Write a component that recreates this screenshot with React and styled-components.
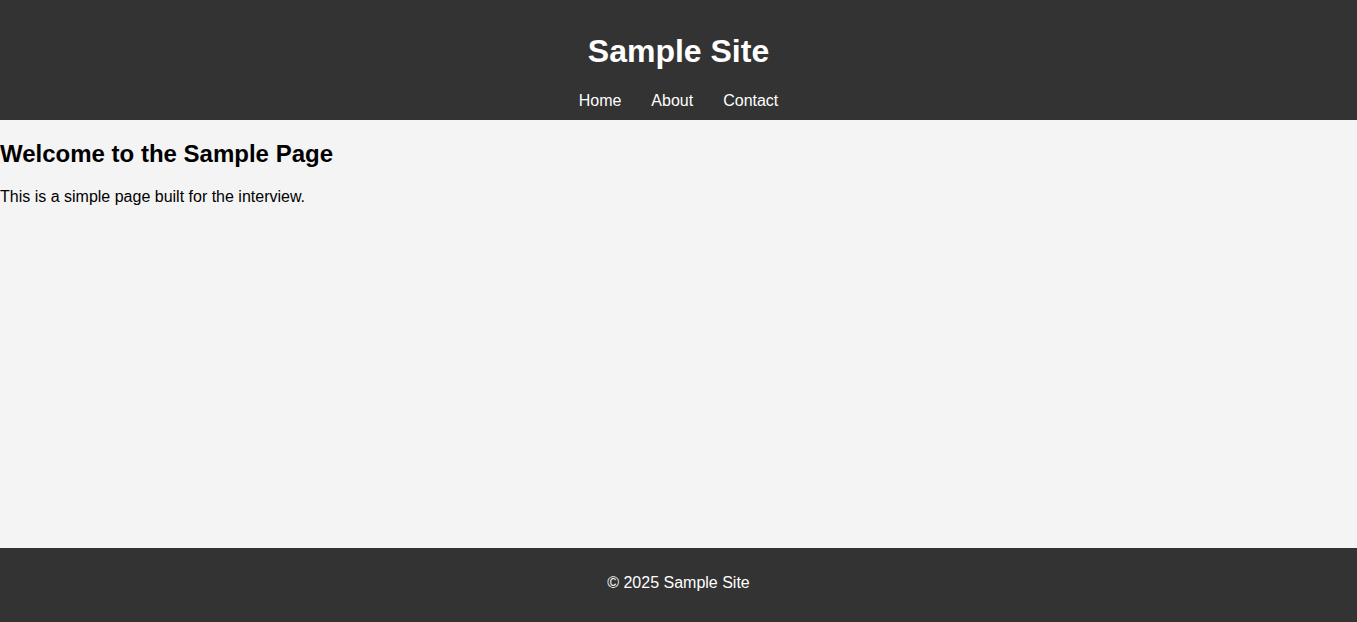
import React from "react";
import styled, { createGlobalStyle } from "styled-components";

const GlobalStyle = createGlobalStyle`
  body {
    margin: 0;
    font-family: "Liberation Sans", Arial, sans-serif;
    background: #f4f4f4;
    color: #000;
  }
`;

export default function App() {
  return (
    <>
      <GlobalStyle />
      <Page>
        <Header>
          <Title>Sample Site</Title>
          <Nav>
            <NavLink href="#home">Home</NavLink>
            <NavLink href="#about">About</NavLink>
            <NavLink href="#contact">Contact</NavLink>
          </Nav>
        </Header>

        <Main>
          <Heading>Welcome to the Sample Page</Heading>
          <Text>This is a simple page built for the interview.</Text>
        </Main>

        <Footer>&copy; 2025 Sample Site</Footer>
      </Page>
    </>
  );
}

const Page = styled.div`
  display: flex;
  flex-direction: column;
  min-height: 100vh;
`;

const Header = styled.header`
  background: #333;
  color: #fff;
  text-align: center;
  padding: 10px 0;
  height: 120px;
  box-sizing: border-box;
`;

const Title = styled.h1`
  font-size: 32px;
  font-weight: bold;
  margin: 23px 0 22px;
  line-height: 37px;
`;

const Nav = styled.nav`
  display: flex;
  justify-content: center;
  gap: 30px;
  line-height: 18px;
`;

const NavLink = styled.a`
  color: #fff;
  text-decoration: none;
  font-size: 16px;
`;

const Main = styled.main`
  flex: 1;
  padding: 0;
`;

const Heading = styled.h2`
  font-size: 24px;
  font-weight: bold;
  margin: 20px 0;
  line-height: 28px;
`;

const Text = styled.p`
  font-size: 16px;
  margin: 0;
  line-height: 18px;
`;

const Footer = styled.footer`
  background: #333;
  color: #fff;
  text-align: center;
  font-size: 16px;
  line-height: 18px;
  height: 74px;
  box-sizing: border-box;
  padding-top: 26px;
`;
